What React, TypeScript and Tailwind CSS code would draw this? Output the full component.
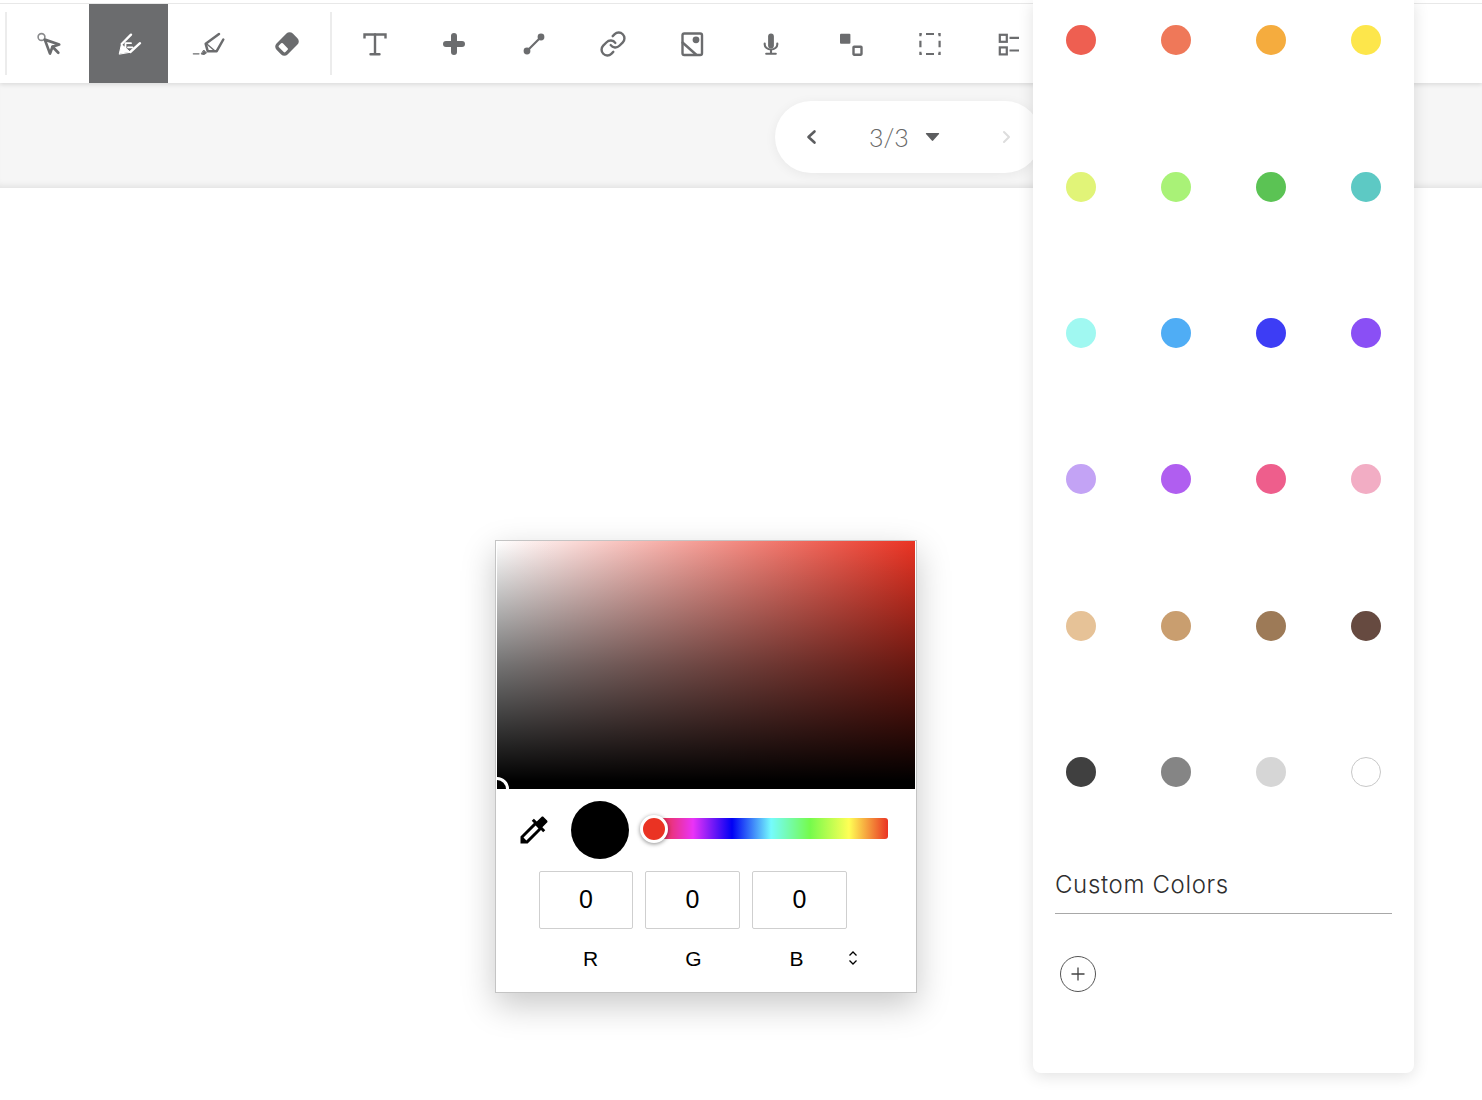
import React from "react";

const C = "#6b6c6e";

function Ico({ children, color = C }: { children: React.ReactNode; color?: string }) {
  return (
    <svg width="36" height="36" viewBox="-18 -18 36 36" fill="none" stroke={color} strokeWidth="2.4" strokeLinecap="round" strokeLinejoin="round">
      {children}
    </svg>
  );
}

const tools: { active?: boolean; icon: React.ReactNode }[] = [
  {
    icon: (
      <Ico>
        <circle cx="-7.5" cy="-7" r="3.4" strokeWidth="1.6" stroke="#8a8b8d" />
        <path d="M-4.2 -4.4 L10.2 .5 L3.5 2.8 L1 9.6 Z" strokeWidth="2.7" />
        <path d="M3.5 2.8 L9.3 8.8" strokeWidth="2.7" />
      </Ico>
    ),
  },
  {
    active: true,
    icon: (
      <Ico color="#fff">
        <path d="M-9.7 9.8 L-7.6 .5 L-3.5 3.8 L1 8 Z" fill="#fff" stroke="#fff" strokeWidth="1" />
        <path d="M-7.3 0 L2 -9.3" />
        <path d="M1.3 8 L11 -.8" />
        <path d="M-3.5 3.5 V-.8 H2" strokeWidth="1.8" />
        <path d="M-1 3.4 H3.5" strokeWidth="1.8" />
      </Ico>
    ),
  },
  {
    icon: (
      <Ico>
        <path d="M-14.7 9.8 H-9" strokeWidth="1.2" />
        <path d="M-4 6.3 L-1.5 9 L-4 10.5 L-6.5 10 Z" fill={C} strokeWidth="1" />
        <path d="M11 -10 L-2.3 -.2 L-.3 7.2 L8.7 7.2 L15.3 -4.5" strokeWidth="2.5" />
        <path d="M-1.5 -.2 L7 7" strokeWidth="1.4" />
      </Ico>
    ),
  },
  {
    icon: (
      <Ico>
        <g transform="rotate(-45)">
          <rect x="-11.5" y="-7.8" width="23" height="15.6" rx="4.5" fill={C} stroke="none" />
          <rect x="-8" y="-4.6" width="5.5" height="9.2" rx="1.2" fill="#fff" stroke="none" />
        </g>
      </Ico>
    ),
  },
];

const tools2: React.ReactNode[] = [
  <Ico>
    <path d="M-10.5 -5.5 V-9.5 H10.5 V-5.5" strokeLinecap="butt" strokeLinejoin="miter" />
    <path d="M0 -9.5 V10.2 M-4.5 10.2 H4.5" />
  </Ico>,
  <Ico>
    <path d="M-8 0 H8 M0 -8 V8" strokeWidth="6" />
  </Ico>,
  <Ico>
    <circle cx="-7" cy="7" r="3.4" fill={C} stroke="none" />
    <circle cx="7" cy="-7" r="3.4" fill={C} stroke="none" />
    <path d="M-7 7 L7 -7" strokeWidth="2.2" />
  </Ico>,
  <Ico>
    <g transform="translate(-13.8 -13.8) scale(1.15)" strokeWidth="2.1">
      <path d="M10 13a5 5 0 0 0 7.54.54l3-3a5 5 0 0 0-7.07-7.07l-1.72 1.71" />
      <path d="M14 11a5 5 0 0 0-7.54-.54l-3 3a5 5 0 0 0 7.07 7.07l1.71-1.71" />
    </g>
  </Ico>,
  <Ico>
    <rect x="-9.5" y="-10.5" width="19.5" height="21.5" rx="1.8" />
    <circle cx="4" cy="-4.2" r="3.4" fill={C} stroke="none" />
    <path d="M-9.5 -1.5 L4 10.5" />
  </Ico>,
  <Ico>
    <rect x="-2.9" y="-10.5" width="5.8" height="15" rx="2.9" fill={C} stroke="none" />
    <path d="M-6.3 -.5 V.5 A6.3 5 0 0 0 6.3 .5 V-.5" strokeWidth="2.1" />
    <path d="M0 6 V9.8 M-4.8 9.8 H4.8" strokeWidth="2.1" />
  </Ico>,
  <Ico>
    <rect x="-11" y="-10.2" width="10.4" height="10" rx="1" fill={C} stroke="none" />
    <rect x="2.5" y="2.7" width="8" height="8" rx=".6" strokeLinejoin="miter" />
  </Ico>,
  <Ico>
    <g strokeLinecap="butt" strokeWidth="2.2">
      <path d="M-10.7 -10 H-8.2 M-4 -10 H4 M8.2 -10 H10.7" />
      <path d="M-10.7 10 H-8.2 M-4 10 H4 M8.2 10 H10.7" />
      <path d="M-9.6 -9 V-7.8 M-9.6 -3.2 V3.2 M-9.6 7.8 V9" />
      <path d="M9.6 -9 V-7.8 M9.6 -3.2 V3.2 M9.6 7.8 V9" />
    </g>
  </Ico>,
  <Ico>
    <rect x="-9.2" y="-9.2" width="7" height="7" strokeLinejoin="miter" strokeWidth="2.2" />
    <rect x="-9.2" y="3.4" width="7" height="7" strokeLinejoin="miter" strokeWidth="2.2" />
    <path d="M.5 -6.2 H10 M.5 6.5 H10" strokeWidth="2.2" strokeLinecap="butt" />
  </Ico>,
];

const colors = [
  "#ee5f51", "#ef7859", "#f5ac3e", "#fde64b",
  "#e1f478", "#a9f277", "#5bc354", "#5dc9c4",
  "#a0f8f1", "#4fadf5", "#3d3df5", "#8a4ff5",
  "#c3a3f5", "#b05ef0", "#ee5e8c", "#f2adc4",
  "#e6c297", "#c99e6f", "#9d7a57", "#664a40",
  "#404040", "#858585", "#d6d6d6", "#ffffff",
];

function Swatch({ c }: { c: string }) {
  return (
    <div className="flex h-[146.4px] items-center justify-center">
      {c === "#ffffff" ? (
        <div className="h-[30px] w-[30px] rounded-full border border-[#c8c8c8] bg-white" />
      ) : (
        <div className="h-[30px] w-[30px] rounded-full" style={{ background: c }} />
      )}
    </div>
  );
}

function Num({ first }: { first?: boolean }) {
  return (
    <div className={`flex h-[58px] items-center justify-center rounded-[2px] border border-[#cfcfcf] text-[25px] text-black ${first ? "w-[94px]" : "w-[95px]"}`}>0</div>
  );
}

export default function App() {
  return (
    <div className="relative h-[1100px] w-full overflow-hidden bg-white" style={{ fontFamily: '"Liberation Sans", Arial, sans-serif' }}>
      <div className="relative z-10 bg-white shadow-[0_2px_4px_rgba(0,0,0,0.1)]">
        <div className="h-[4px] border-b border-[#e8e8e8]" />
        <div className="flex h-[79px] items-center pl-[5px]">
          <div className="h-[63px] w-[2px] bg-[#ececec]" />
          <div className="ml-[2.75px] flex">
            {tools.map((t, i) => (
              <div key={i} className={`flex h-[79px] w-[79.25px] items-center justify-center ${t.active ? "bg-[#6b6c6e]" : ""}`}>
                {t.icon}
              </div>
            ))}
          </div>
          <div className="ml-[3.25px] h-[63px] w-[2px] bg-[#ececec]" />
          <div className="ml-[3.5px] flex">
            {tools2.map((t, i) => (
              <div key={i} className="flex h-[79px] w-[79.25px] items-center justify-center">
                {t}
              </div>
            ))}
          </div>
        </div>
      </div>

      <div className="h-[105px] bg-[#f6f6f6] pt-[18px] pl-[775px] shadow-[inset_0_-7px_7px_-5px_rgba(0,0,0,0.09)]">
        <div className="flex h-[72px] w-[266px] items-center rounded-[36px] bg-white shadow-[0_2px_12px_rgba(0,0,0,0.06)]">
          <svg className="ml-[28px]" width="16" height="16" viewBox="0 0 16 16" fill="none" stroke="#5c5d5f" strokeWidth="2.6" strokeLinecap="round" strokeLinejoin="round">
            <path d="M11.5 2.5 L5.5 8 L11.5 13.5" />
          </svg>
          <span className="ml-[50px] text-[25px] leading-none font-light text-[#666]" style={{ fontFamily: "Lato, sans-serif" }}>3/3</span>
          <svg className="ml-[16px]" width="15" height="10" viewBox="0 0 15 10" fill="#5c5d5f">
            <path d="M1.5 1 H13.5 Q14.6 1 14 2 L8.2 8.6 Q7.5 9.3 6.8 8.6 L1 2 Q.4 1 1.5 1 Z" />
          </svg>
          <svg className="ml-[59px]" width="16" height="16" viewBox="0 0 16 16" fill="none" stroke="#dddddd" strokeWidth="2" strokeLinecap="round" strokeLinejoin="round">
            <path d="M5 3 L10 8 L5 13" />
          </svg>
        </div>
      </div>

      {/* Colour picker popover */}
      <div className="absolute top-[540px] left-[495px] z-20 h-[453px] w-[422px] border border-[#c4c4c4] bg-white px-px shadow-[0_12px_32px_rgba(0,0,0,0.22)]">
        <div className="relative h-[248px] overflow-hidden bg-[linear-gradient(to_bottom,rgba(0,0,0,0),rgba(0,0,0,0.55)_50%,#000_97%),linear-gradient(to_right,#fff,#ea3323)]">
          <div className="absolute top-[-12px] left-[-12px] mt-[248px] h-[24px] w-[24px] rounded-full border-[3px] border-white" />
        </div>
        <div className="mt-[12px] flex h-[58px] items-center">
          <svg className="ml-[19px]" width="36" height="36" viewBox="0 0 24 24" fill="#000">
            <path d="M20.71 5.63l-2.34-2.34c-.39-.39-1.02-.39-1.41 0l-3.12 3.12-1.93-1.91-1.41 1.41 1.42 1.42L3 16.25V21h4.75l8.92-8.92 1.42 1.42 1.41-1.41-1.92-1.92 3.12-3.12c.4-.4.4-1.03.01-1.42zM6.92 19L5 17.08l8.06-8.06 1.92 1.92L6.92 19z" />
          </svg>
          <div className="ml-[19px] h-[58px] w-[58px] rounded-full bg-black" />
          <div className="relative mb-[4px] ml-[25px] h-[21px] w-[234px] rounded-[3px] bg-[linear-gradient(to_right,#ea3323_0%,#ea33f7_16.67%,#0000f5_33.33%,#75fbfd_50%,#75fb4c_66.67%,#ffff55_83.33%,#ea3323_100%)]">
            <div className="absolute top-[-3px] left-[-14px] h-[28px] w-[28px] rounded-full border-[3px] border-white bg-[#ea3323] shadow-[0_1px_4px_rgba(0,0,0,0.45)]" />
          </div>
        </div>
        <div className="mt-[12px] ml-[42px] flex gap-[12px]">
          <Num first />
          <Num />
          <Num />
        </div>
        <div className="mt-[17px] ml-[42px] flex h-[24px] items-center text-[21px] leading-none text-black">
          <div className="w-[103px] text-center">R</div>
          <div className="w-[103px] text-center">G</div>
          <div className="w-[103px] text-center">B</div>
          <svg width="10" height="16" viewBox="0 0 10 16" fill="none" stroke="#000" strokeWidth="1.3">
            <path d="M1.5 5.5 L5 2 L8.5 5.5 M1.5 10.5 L5 14 L8.5 10.5" />
          </svg>
        </div>
      </div>

      {/* Colour palette panel */}
      <div className="absolute top-0 left-[1033px] z-30 h-[1073px] w-[380.5px] overflow-hidden rounded-b-lg bg-white shadow-[0_3px_16px_rgba(0,0,0,0.12)]">
        <div className="mt-[-33px] grid grid-cols-4">
          {colors.map((c, i) => (
            <Swatch key={i} c={c} />
          ))}
        </div>
        <div className="mt-[22px] mr-[21.5px] ml-[22px] border-b border-[#a8a8a8] pb-[9.5px]">
          <div className="text-[24px] leading-[36px] font-light tracking-[0.65px] text-[#2e2e2e]" style={{ fontFamily: "Inter, sans-serif" }}>
            Custom Colors
          </div>
        </div>
        <div className="mt-[42.5px] ml-[27px] flex h-[36px] w-[36px] items-center justify-center rounded-full border border-[#555]">
          <svg width="16" height="16" viewBox="0 0 16 16" stroke="#444" strokeWidth="1.3">
            <path d="M8 1.5 V14.5 M1.5 8 H14.5" />
          </svg>
        </div>
      </div>
    </div>
  );
}
